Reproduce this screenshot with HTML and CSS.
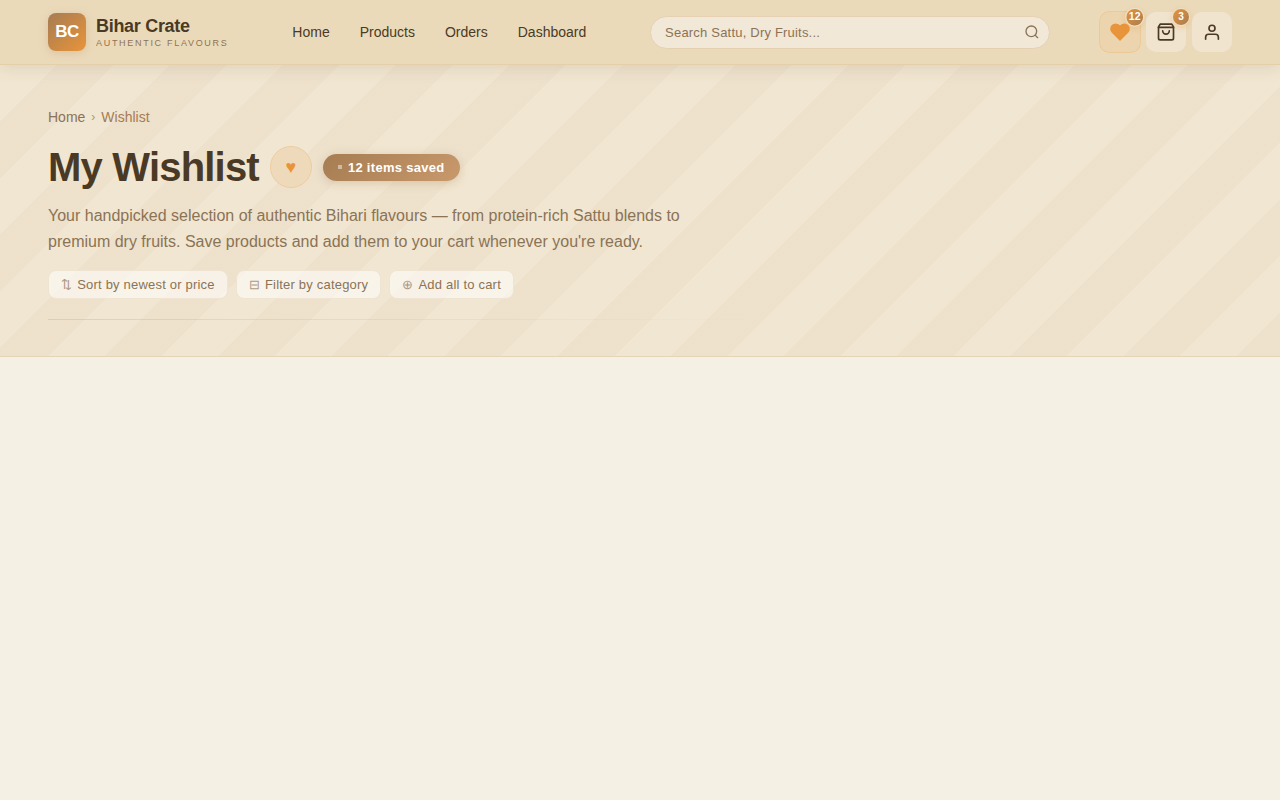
FILE: index.html
```html
<!DOCTYPE html>
<html lang="en">
<head>
<meta charset="utf-8">
<meta name="viewport" content="width=device-width, initial-scale=1">
<title>My Wishlist – Bihar Crate</title>
<link rel="stylesheet" href="styles.css">
</head>
<body>
<header class="header">
  <a class="brand" href="#">
    <span class="brand-mark">BC</span>
    <span class="brand-text">
      <span class="brand-name">Bihar Crate</span>
      <span class="brand-tag">AUTHENTIC FLAVOURS</span>
    </span>
  </a>
  <nav class="nav" aria-label="Main">
    <a href="#">Home</a>
    <a href="#">Products</a>
    <a href="#">Orders</a>
    <a href="#">Dashboard</a>
  </nav>
  <form class="search" role="search">
    <input class="search-input" type="search" placeholder="Search Sattu, Dry Fruits..." aria-label="Search products">
    <button class="search-button" type="button" aria-label="Search">
      <svg width="16" height="16" viewBox="0 0 24 24" fill="none" stroke="currentColor" stroke-width="2" stroke-linecap="round" stroke-linejoin="round"><circle cx="11" cy="11" r="8"/><path d="m20.5 20.5-3.85-3.85"/></svg>
    </button>
  </form>
  <div class="actions">
    <button class="action action-active" type="button" aria-label="Wishlist">
      <svg width="20" height="20" viewBox="0 0 24 24" fill="currentColor" stroke="currentColor" stroke-width="1.5" stroke-linejoin="round"><path d="M20.84 4.61a5.5 5.5 0 0 0-7.78 0L12 5.67l-1.06-1.06a5.5 5.5 0 0 0-7.78 7.78L12 21.23l8.84-8.84a5.5 5.5 0 0 0 0-7.78z"/></svg>
      <span class="badge">12</span>
    </button>
    <button class="action" type="button" aria-label="Cart">
      <svg width="20" height="20" viewBox="0 0 24 24" fill="none" stroke="currentColor" stroke-width="2" stroke-linecap="round" stroke-linejoin="round"><path d="M5 2.5 3 6v13.500a2 2 0 0 0 2 2h14a2 2 0 0 0 2-2V6l-2-3.500z"/><path d="M3 6.500h18"/><path d="M16 10.500a4 4 0 0 1-8 0"/></svg>
      <span class="badge">3</span>
    </button>
    <button class="action" type="button" aria-label="Account">
      <svg width="18" height="18" viewBox="0 0 24 24" fill="none" stroke="currentColor" stroke-width="2.200" stroke-linecap="round" stroke-linejoin="round"><path d="M20.500 21.500v-2.500a4 4 0 0 0-4-4h-9a4 4 0 0 0-4 4v2.500"/><circle cx="12" cy="7" r="4"/></svg>
    </button>
  </div>
</header>
<main>
  <section class="hero">
    <nav class="crumbs" aria-label="Breadcrumb">
      <a href="#">Home</a>
      <span class="crumb-sep">›</span>
      <span class="crumb-current">Wishlist</span>
    </nav>
    <div class="title-row">
      <h1 class="title">My Wishlist</h1>
      <span class="title-heart">♥</span>
      <span class="count"><span class="count-dot"></span>12 items saved</span>
    </div>
    <p class="lead">Your handpicked selection of authentic Bihari flavours — from protein-rich Sattu blends to premium dry fruits. Save products and add them to your cart whenever you're ready.</p>
    <div class="hints">
      <button class="hint" type="button"><span class="hint-icon">⇅</span>Sort by newest or price</button>
      <button class="hint" type="button"><span class="hint-icon">⊟</span>Filter by category</button>
      <button class="hint" type="button"><span class="hint-icon">⊕</span>Add all to cart</button>
    </div>
    <div class="rule"></div>
  </section>
</main>
</body>
</html>
```
FILE: styles.css
```css
* { box-sizing: border-box; }
body {
  margin: 0;
  background: #f5f0e4;
  color: #4a3a25;
  font-family: "Liberation Sans", Arial, sans-serif;
}
a { color: inherit; text-decoration: none; }
button, input { font: inherit; }
button { cursor: pointer; }
svg { display: block; }

.header {
  position: relative;
  z-index: 1;
  display: flex;
  align-items: center;
  justify-content: space-between;
  gap: 48px;
  min-height: 65px;
  padding: 0 48px;
  background: #ebdaba;
  border-bottom: 1px solid #e5cfa9;
  box-shadow: 0 2px 16px rgba(100, 75, 45, 0.14);
}
.brand { display: flex; align-items: center; gap: 10px; }
.brand-mark {
  display: grid;
  place-items: center;
  width: 38px;
  height: 38px;
  border-radius: 8px;
  background: linear-gradient(135deg, #a67c52, #e8943a);
  box-shadow: 0 2px 8px rgba(166, 124, 82, 0.25);
  color: #fff;
  font-size: 17px;
  font-weight: 700;
  letter-spacing: -0.5px;
}
.brand-text { display: flex; flex-direction: column; gap: 2px; padding-top: 1px; }
.brand-name { font-size: 18px; line-height: 20px; font-weight: 700; letter-spacing: -0.3px; }
.brand-tag { color: #8b7355; font-size: 9px; line-height: 11px; letter-spacing: 1.7px; white-space: nowrap; }

.nav { display: flex; gap: 30px; padding: 0 14px; font-size: 14px; }

.search { position: relative; flex: 1; max-width: 400px; }
.search-input {
  display: block;
  width: 100%;
  height: 33px;
  padding: 0 40px 0 14px;
  border: 1px solid #e5d0b4;
  border-radius: 17px;
  background: #f2e8d7;
  color: #4a3a25;
  font-size: 13px;
  letter-spacing: 0.2px;
  appearance: none;
  outline: 0;
}
.search-input::placeholder { color: #8b7355; opacity: 1; }
.search-button {
  position: absolute;
  top: 0;
  right: 9px;
  display: grid;
  place-items: center;
  width: 18px;
  height: 32px;
  padding: 0;
  border: 0;
  background: none;
  color: #8b7355;
}

.actions { display: flex; gap: 6px; }
.action {
  position: relative;
  display: grid;
  place-items: center;
  width: 40px;
  height: 40px;
  padding: 0;
  border: 0;
  border-radius: 10px;
  background: #f0e4cf;
  color: #4a3a25;
}
.action-active {
  border: 1px solid #edc998;
  background: #ecd4ae;
  color: #e8943a;
  transform: scale(1.05);
}
.badge {
  position: absolute;
  top: -4px;
  right: -4px;
  min-width: 18px;
  height: 18px;
  padding: 0 2px;
  border: 1px solid #f0e0c4;
  border-radius: 9px;
  background: linear-gradient(135deg, #e8943a, #a67c52);
  box-shadow: 0 2px 6px rgba(232, 148, 58, 0.3);
  color: #fff;
  font-size: 10px;
  line-height: 16px;
  font-weight: 700;
  text-align: center;
}

.hero {
  padding: 43px 48px 36px;
  border-bottom: 1px solid #e5d5b8;
  background:
    repeating-linear-gradient(135deg, transparent 0 40px, rgba(139, 115, 85, 0.04) 40px 80px),
    #f1e6d1;
}
.crumbs { display: flex; align-items: center; gap: 6px; color: #8b7355; font-size: 14px; line-height: 18px; }
.crumb-sep { font-size: 12px; opacity: 0.7; }
.crumb-current { color: #a67c52; }

.title-row { display: flex; align-items: center; gap: 11px; margin-top: 20px; }
.title { margin: 0; font-size: 40px; line-height: 42px; font-weight: 700; letter-spacing: -0.8px; }
.title-heart {
  display: grid;
  place-items: center;
  width: 42px;
  height: 42px;
  border: 1px solid #edcda2;
  border-radius: 50%;
  background: #eedabb;
  color: #e8943a;
  font-size: 18px;
}
.count {
  display: flex;
  align-items: center;
  gap: 6px;
  padding: 6px 15px;
  border-radius: 14px;
  background: linear-gradient(135deg, #a67c52, #c8996b);
  box-shadow: 0 2px 10px rgba(166, 124, 82, 0.3);
  color: #fff;
  font-size: 13px;
  line-height: 15px;
  font-weight: 700;
  letter-spacing: 0.3px;
}
.count-dot { width: 4px; height: 4px; background: rgba(255, 255, 255, 0.45); }

.lead { max-width: 640px; margin: 15px 0 0; color: #8b7355; font-size: 16px; line-height: 26px; }

.hints { display: flex; flex-wrap: wrap; gap: 8px; margin-top: 15px; }
.hint {
  display: flex;
  align-items: center;
  gap: 5px;
  padding: 6px 12px;
  border: 1px solid #efe4d1;
  border-radius: 8px;
  background: rgba(255, 255, 255, 0.55);
  color: #8b7355;
  font-size: 13px;
  line-height: 15px;
  letter-spacing: 0.2px;
}
.hint-icon { opacity: 0.7; }
.rule { height: 1px; margin-top: 20px; background: linear-gradient(90deg, rgba(200, 153, 107, 0.3), transparent 60%); }
```
